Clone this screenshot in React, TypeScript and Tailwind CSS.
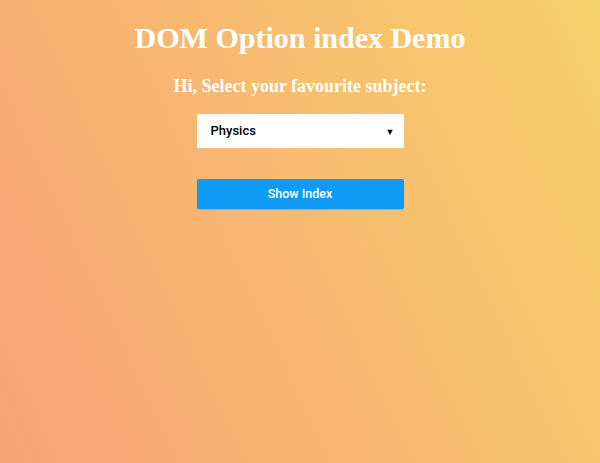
import React from "react";

export default function App() {
  return (
    <div
      className="w-[600px] h-[463px] overflow-hidden flex flex-col items-center bg-[linear-gradient(65deg,#f8a377,#f6d06a)]"
    >
      <h1 className="mt-[21px] text-[30px] leading-[34px] font-bold text-white font-['Liberation_Serif',serif]">
        DOM Option index Demo
      </h1>
      <h3 className="mt-[21px] text-[18px] leading-[21px] font-bold text-white font-['Liberation_Serif',serif]">
        Hi, Select your favourite subject:
      </h3>
      <div className="mt-[17px] w-[207px] h-[34px] bg-white flex items-center justify-between pl-[14px] pr-[9px]">
        <span className="text-[13px] font-medium text-black font-['Roboto',sans-serif]">Physics</span>
        <span className="text-[9px] text-black leading-none">▼</span>
      </div>
      <button className="mt-[31px] w-[207px] h-[30px] rounded-[2px] bg-[#0e9af5] text-white text-[12.5px] font-medium font-['Roboto',sans-serif] shadow-[0_1px_1px_rgba(0,0,0,0.15)]">
        Show Index
      </button>
    </div>
  );
}
